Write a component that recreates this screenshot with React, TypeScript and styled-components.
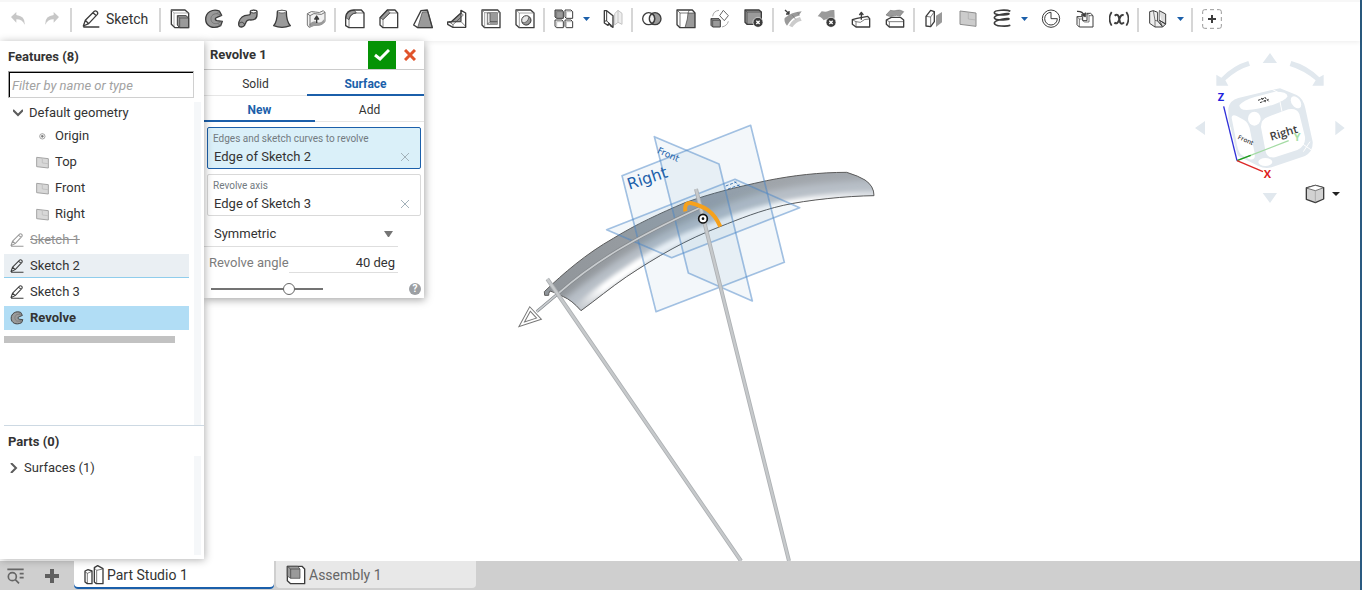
import React from 'react';
import styled, { createGlobalStyle } from 'styled-components';

const ink = '#333';
const line = '#3c3c3c';
const fill = '#9a9a9a';
const blue = '#1b5faa';

const GlobalStyle = createGlobalStyle`
  * { box-sizing: border-box; }
  body { margin: 0; background: #fff; color: ${ink}; font-family: Roboto, "Liberation Sans", sans-serif; font-size: 13px; line-height: 20px; }
  button, input, select { font: inherit; color: inherit; }
  button { border: 0; padding: 0; background: none; cursor: pointer; }
  svg { display: block; flex: none; }
  ul { list-style: none; margin: 0; padding: 0; }
`;

const Page = styled.div`
  display: flex;
  flex-direction: column;
  min-height: 100vh;
  border-right: 2px solid #2a5a80;
`;

/* Toolbar */

const ToolbarBar = styled.header`
  display: flex;
  height: 41px;
  padding: 0 1px 5px;
  border-top: 2px solid #f7f7f7;
  background: #fff;
  box-shadow: 0 1px 5px rgba(0, 0, 0, 0.08);
`;

const ToolGroup = styled.div`
  display: flex;
  align-items: center;

  & + & {
    padding-left: 5px;
    background: linear-gradient(#d6d6d6, #d6d6d6) 1px 6px / 2px 24px no-repeat;
  }
`;

const ToolButton = styled.button<{ $dim?: boolean }>`
  display: flex;
  align-items: center;
  justify-content: center;
  width: 34px;
  height: 34px;
  opacity: ${(p) => (p.$dim ? 0.65 : 1)};
`;

const SketchButton = styled.button`
  display: flex;
  align-items: center;
  gap: 6px;
  width: 84px;
  height: 34px;
  padding-left: 8px;
  font-size: 14px;
`;

const CaretButton = styled.button`
  display: flex;
  align-items: center;
  width: 15px;
  height: 34px;
  padding-left: 2px;
`;

const Glyph = ({ children, size = 20 }: { children: React.ReactNode; size?: number }) => (
  <svg width={size} height={size} viewBox="0 0 60 60" fill="none" stroke={line} strokeWidth="4" strokeLinejoin="round" aria-hidden="true">
    {children}
  </svg>
);

const Caret = ({ color = blue, w = 7 }: { color?: string; w?: number }) => (
  <svg width={w} height="4" viewBox="0 0 8 4" preserveAspectRatio="none" aria-hidden="true">
    <path d="M0 0H8L4 4Z" fill={color} />
  </svg>
);

const Pencil = ({ size = 18, color = line }: { size?: number; color?: string }) => (
  <svg width={size} height={size} viewBox="0 0 54 54" fill="none" stroke={color} strokeWidth="4" strokeLinejoin="round" aria-hidden="true">
    <path d="M4 48L10 31L37 4C41 0 50 7 46 13L20 41L4 48ZM10 31L20 41M33 8L43 17M4 51H52" />
  </svg>
);

const RevolveGlyph = ({ size = 20 }: { size?: number }) => (
  <Glyph size={size}>
    <path d="M46 6C26 -2 5 10 5 31C5 52 27 62 50 50L55 37L39 35C32 33 32 27 39 25L53 19Z" fill={fill} />
    <path d="M46 6L39 14C24 14 20 24 21 31C22 42 31 46 41 43L50 50M39 14L53 19M41 43L55 37" strokeWidth="2" stroke="#666" />
  </Glyph>
);

const DeleteBadge = () => (
  <>
    <circle cx="42" cy="40" r="15" fill={line} stroke="#fff" strokeWidth="2" />
    <path d="M37 35L47 45M47 35L37 45" stroke="#fff" />
  </>
);

type Tool = { label: string; icon: React.ReactNode; menu?: boolean };

const groups: Tool[][] = [
  [
    {
      label: 'Extrude',
      icon: (
        <Glyph>
          <path d="M4 3H45L56 13V56H15L4 46Z" />
          <path d="M12 12H56M12 12L4 3M12 12V52" strokeWidth="2" stroke="#888" />
          <path d="M22 20H48L56 27V56H29L22 48Z" fill={fill} strokeWidth="3" />
          <path d="M29 27V56M29 27H56M29 27L22 20" strokeWidth="2" />
        </Glyph>
      ),
    },
    { label: 'Revolve', icon: <RevolveGlyph /> },
    {
      label: 'Sweep',
      icon: (
        <Glyph>
          <path d="M37 8C37 2 57 2 57 8V17C57 30 47 33 38 33C27 32 25 36 22 44C18 57 2 57 2 46C2 36 8 24 20 20C31 17 37 20 37 14Z" fill={fill} />
          <ellipse cx="47" cy="8" rx="9" ry="4" fill="#fff" strokeWidth="3" />
          <path d="M5 43C12 35 20 43 20 50" strokeWidth="3" />
        </Glyph>
      ),
    },
    {
      label: 'Loft',
      icon: (
        <Glyph>
          <path d="M16 8C16 3 43 3 43 8C43 28 48 42 55 50Q30 60 5 50C12 42 16 28 16 8Z" fill={fill} />
          <ellipse cx="30" cy="8" rx="12" ry="4" fill="#fff" strokeWidth="2" />
        </Glyph>
      ),
    },
    {
      label: 'Thicken',
      icon: (
        <Glyph>
          <path d="M4 14Q16 4 28 9T52 5L57 10V38Q48 49 35 48T9 55L4 48Z" fill="#f2f2f2" stroke="#777" strokeWidth="3" />
          <path d="M10 46Q22 33 33 39T55 30V40Q48 51 35 50T11 56Z" fill={fill} stroke="none" />
          <path d="M4 14L12 20V50M12 20Q24 10 35 15T57 10" stroke="#777" strokeWidth="3" />
          <path d="M32 42V24M26 30L32 21L38 30Z" fill={line} />
        </Glyph>
      ),
    },
  ],
  [
    {
      label: 'Fillet',
      icon: (
        <Glyph>
          <path d="M2 26Q4 3 28 3L34 12Q16 14 12 32Z" fill={fill} strokeWidth="2" />
          <path d="M2 50V26Q4 3 28 3H49L57 12V56H12L2 50Z" />
          <path d="M12 56V32Q16 12 34 12H57" strokeWidth="2" />
        </Glyph>
      ),
    },
    {
      label: 'Chamfer',
      icon: (
        <Glyph>
          <path d="M3 26L25 3L33 11L12 32Z" fill={fill} strokeWidth="2" />
          <path d="M3 26L25 3H48L56 12V56H12L3 48Z" />
          <path d="M12 56V32L33 12H56" strokeWidth="2" />
        </Glyph>
      ),
    },
    {
      label: 'Draft',
      icon: (
        <Glyph>
          <path d="M14 56L28 9L45 8L58 56Z" fill={fill} strokeWidth="2" />
          <path d="M2 48L24 5L43 3L58 56H14Z" />
        </Glyph>
      ),
    },
    {
      label: 'Rib',
      icon: (
        <Glyph>
          <path d="M42 12V38L12 39Z" fill={fill} strokeWidth="2" />
          <path d="M42 4L56 12V55H18L2 46V39H12L42 12Z" />
          <path d="M42 4V38L56 52M42 38H6L18 47V55M42 12L49 18L18 47" strokeWidth="2" />
        </Glyph>
      ),
    },
    {
      label: 'Shell',
      icon: (
        <Glyph>
          <path d="M3 3H50L57 11V56H11L3 48Z" />
          <path d="M3 3L11 11V56M11 11H57M50 3L57 11" strokeWidth="2" stroke="#777" />
          <path d="M19 12H49V46H19Z" fill="#e6e6e6" strokeWidth="2" />
          <path d="M27 12H49V46H27Z" fill={fill} stroke="none" />
          <path d="M27 12V38L19 46M27 38H49" strokeWidth="2" />
        </Glyph>
      ),
    },
    {
      label: 'Hole',
      icon: (
        <Glyph>
          <path d="M3 3H47L57 12V56H13L3 47Z" />
          <path d="M3 3L13 12V56M13 12H57" strokeWidth="2" stroke="#777" />
          <circle cx="34" cy="34" r="14" fill="#e6e6e6" strokeWidth="3" />
          <path d="M42 23A14 14 0 1 1 21 41Q38 44 42 23Z" fill={fill} strokeWidth="2" />
        </Glyph>
      ),
    },
  ],
  [
    {
      label: 'Linear pattern',
      menu: true,
      icon: (
        <Glyph>
          <path d="M3 3H24L28 8V28H8L3 24Z" fill={fill} strokeWidth="3" />
          <path d="M33 3H51L56 8V28H37L33 24ZM3 33H24L28 38V56H8L3 52ZM33 33H51L56 38V56H37L33 52Z" strokeWidth="3" />
          <path d="M8 8H28M8 8V28M37 8H56M37 8V28M8 38H28M8 38V55M37 38H55M37 38V55" strokeWidth="1" />
        </Glyph>
      ),
    },
    {
      label: 'Mirror',
      icon: (
        <Glyph>
          <path d="M57 13L45 4L35 14V48L45 40L57 46ZM45 4V40" fill="#eee" stroke="#c4c4c4" strokeWidth="3" />
          <path d="M4 5H11L30 20V55L23 51L18 43L15 49L4 42Z" fill="#fff" />
          <path d="M11 6V36L30 53M4 36H11" strokeWidth="3" />
        </Glyph>
      ),
    },
  ],
  [
    {
      label: 'Boolean',
      icon: (
        <Glyph>
          <circle cx="39" cy="29" r="18" fill={fill} />
          <circle cx="20" cy="29" r="18" fill="#fff" />
          <path d="M30 14A18 18 0 0 1 30 44A18 18 0 0 1 30 14Z" fill="#eee" />
        </Glyph>
      ),
    },
    {
      label: 'Split',
      icon: (
        <Glyph>
          <path d="M36 12H57V56H27L34 30Z" fill={fill} stroke="none" />
          <path d="M3 3H49L57 12V56H12L3 47Z" />
          <path d="M3 3L12 12V56M12 12H57M40 3L36 12L34 30L27 56" strokeWidth="2" />
        </Glyph>
      ),
    },
    {
      label: 'Transform',
      icon: (
        <Glyph>
          <path d="M3 29H27L31 34V54H8L3 49Z" fill={fill} strokeWidth="3" />
          <path d="M3 29L8 34H31M8 34V54" strokeWidth="2" />
          <path d="M40 4L55 20L43 35L29 20Z" fill="#fff" stroke="#666" strokeWidth="3" />
          <path d="M8 22Q10 6 27 4M36 54Q52 50 55 37" stroke="#aaa" strokeWidth="3" />
        </Glyph>
      ),
    },
    {
      label: 'Delete part',
      icon: (
        <Glyph>
          <path d="M3 3H45L52 9V46H9L3 40Z" fill={fill} />
          <path d="M3 3L9 9H52M9 9V46" strokeWidth="2" />
          <DeleteBadge />
        </Glyph>
      ),
    },
  ],
  [
    {
      label: 'Modify fillet',
      icon: (
        <Glyph>
          <path d="M5 27Q26 9 56 7L47 20Q28 23 12 50Q2 38 5 27Z" fill={fill} stroke="none" />
          <path d="M18 50Q29 29 51 24L56 35Q38 38 28 55Z" fill="#ccc" stroke="none" />
          <path d="M27 17L38 31M44 10L49 20" stroke="#777" strokeWidth="2" />
          <path d="M6 3L18 14M18 6V15H9" />
        </Glyph>
      ),
    },
    {
      label: 'Delete face',
      icon: (
        <Glyph>
          <path d="M2 22L14 7Q28 10 34 6T52 3L53 26L40 31Q25 30 20 34Q11 22 2 22Z" fill={fill} stroke="none" />
          <DeleteBadge />
        </Glyph>
      ),
    },
    {
      label: 'Move face',
      icon: (
        <Glyph>
          <path d="M4 32L18 28L50 22L56 29V54H15L4 46Z" />
          <path d="M4 32L15 38L28 40Q40 28 56 30M15 38V54" strokeWidth="2" />
          <path d="M31 32V14M25 18L31 10L37 18" />
        </Glyph>
      ),
    },
    {
      label: 'Replace face',
      icon: (
        <Glyph>
          <path d="M3 18L16 4Q28 7 36 4T56 8L45 21Q34 17 24 21T3 18Z" fill={fill} stroke="#777" strokeWidth="2" />
          <path d="M4 33L19 25H46L56 33V54H13L4 46Z" />
          <path d="M4 33L13 38H56M13 38V54" strokeWidth="2" />
        </Glyph>
      ),
    },
  ],
  [
    {
      label: 'Offset surface',
      icon: (
        <Glyph>
          <path d="M6 51V22L20 4L31 8V38L20 53Z" />
          <path d="M20 53V24L31 8M6 22L20 24" strokeWidth="2" />
          <path d="M36 20L54 9V40L36 54Z" fill={fill} stroke="none" />
        </Glyph>
      ),
    },
    {
      label: 'Plane',
      icon: (
        <Glyph>
          <path d="M6 6L54 12V52L6 46Z" fill="#ccc" stroke="#8c8c8c" strokeWidth="3" />
          <path d="M31 9V30L54 33" stroke="#aaa" strokeWidth="2" />
        </Glyph>
      ),
    },
    {
      label: 'Helix',
      menu: true,
      icon: (
        <Glyph>
          <path d="M55 7C45 1 7 3 7 11S49 19 51 15S7 17 7 26S49 34 51 30S7 32 7 42C7 53 45 53 55 49" strokeWidth="5" />
        </Glyph>
      ),
    },
    {
      label: 'Sketch circle',
      icon: (
        <Glyph>
          <circle cx="30" cy="29" r="26" strokeWidth="3" />
          <path d="M30 10A19 19 0 1 0 49 29H30Z" strokeWidth="3" />
        </Glyph>
      ),
    },
    {
      label: 'Derived',
      icon: (
        <Glyph>
          <path d="M6 23H23V35H36V13H47L54 20V54H13L6 47Z" strokeWidth="3" />
          <path d="M6 23L13 30H23M13 30V54M36 13L42 20H54M42 20V39H29L23 35" strokeWidth="2" />
          <path d="M6 7Q23 6 27 19" strokeWidth="4" />
          <path d="M18 18L31 24L33 11Z" fill={line} strokeWidth="2" />
        </Glyph>
      ),
    },
    {
      label: 'Variable',
      icon: (
        <Glyph>
          <path d="M8 9Q-5 29 8 50M52 9Q65 29 52 50" strokeWidth="5" />
          <path d="M17 20Q28 11 31 31T45 40M44 19Q36 14 31 31T16 41" strokeWidth="6" />
        </Glyph>
      ),
    },
  ],
  [
    {
      label: 'Sheet metal',
      menu: true,
      icon: (
        <Glyph>
          <path d="M29 36L51 48L44 54H21V34Z" fill="#aaa" stroke="none" />
          <path d="M5 8L16 5L29 10V36L44 54H21L5 43Z" fill="#eee" strokeWidth="3" />
          <path d="M16 5L21 34V54M29 36L21 34" strokeWidth="2" />
          <path d="M34 5L53 15V45L44 54M53 45L34 34Z" fill="#ddd" strokeWidth="3" />
          <path d="M34 5V34L44 54" strokeWidth="2" />
        </Glyph>
      ),
    },
  ],
  [
    {
      label: 'Add custom feature',
      icon: (
        <Glyph>
          <path d="M2 15V8Q2 2 8 2H15M45 2H52Q58 2 58 8V15M58 45V52Q58 58 52 58H45M15 58H8Q2 58 2 52V45M24 2H36M24 58H36M2 24V36M58 24V36" stroke="#999" strokeWidth="3" />
          <path d="M30 18V42M18 30H42" strokeWidth="6" />
        </Glyph>
      ),
    },
  ],
];

const UndoGlyph = ({ flip }: { flip?: boolean }) => (
  <Glyph>
    <path
      d={flip ? 'M51 24L35 9V18Q8 21 10 47Q17 31 35 31V41Z' : 'M9 24L25 9V18Q52 21 50 47Q43 31 25 31V41Z'}
      fill="#aaa"
      stroke="none"
    />
  </Glyph>
);

const Toolbar = () => (
  <ToolbarBar>
    <ToolGroup>
      <ToolButton $dim aria-label="Undo"><UndoGlyph /></ToolButton>
      <ToolButton $dim aria-label="Redo"><UndoGlyph flip /></ToolButton>
    </ToolGroup>
    <ToolGroup>
      <SketchButton><Pencil />Sketch</SketchButton>
    </ToolGroup>
    {groups.map((tools) => (
      <ToolGroup key={tools[0].label}>
        {tools.map((tool) => (
          <React.Fragment key={tool.label}>
            <ToolButton aria-label={tool.label}>{tool.icon}</ToolButton>
            {tool.menu && <CaretButton aria-label={`${tool.label} menu`}><Caret /></CaretButton>}
          </React.Fragment>
        ))}
      </ToolGroup>
    ))}
  </ToolbarBar>
);

/* Feature list */

const Workspace = styled.main`
  display: flex;
  flex: 1;
`;

const Sidebar = styled.aside`
  position: relative;
  z-index: 1;
  display: flex;
  flex-direction: column;
  width: 204px;
  margin-bottom: 2px;
  padding-left: 4px;
  background: #fff;
  box-shadow: 1px 1px 8px rgba(0, 0, 0, 0.3);
`;

const PanelTitle = styled.h2`
  margin: 0;
  padding: 6px 4px 4px;
  font-size: 13px;
  line-height: 20px;
  font-weight: 700;
`;

const FilterInput = styled.input`
  width: 186px;
  height: 27px;
  margin: 0 4px 4px;
  padding: 2px 3px 0;
  border: 1px solid;
  border-color: #a0a0a0 #d0d0d0 #d0d0d0 #a0a0a0;
  box-shadow: inset 1px 1px 0 #000;
  outline: 0;

  &::placeholder { color: #a2a2a2; font-style: italic; }
`;

const ScrollArea = styled.div<{ $grow?: boolean }>`
  flex: ${(p) => (p.$grow ? '1' : 'none')};
  min-height: ${(p) => (p.$grow ? 'auto' : '99px')};
  margin-right: 3px;
  padding-right: 12px;
  background: linear-gradient(#f5f7f9, #f5f7f9) right / 7px 100% no-repeat;
`;

const FeatureRow = styled.button<{ $depth?: number; $state?: 'hover' | 'selected' | 'suppressed'; $head?: boolean }>`
  display: flex;
  align-items: center;
  gap: 6px;
  width: 100%;
  height: ${(p) => (p.$head ? 22 : 24)}px;
  margin-bottom: ${(p) => (p.$head ? 0 : 2)}px;
  padding-top: 1px;
  padding-left: ${(p) => (p.$depth ? 32 : p.$head ? 9 : 6)}px;
  text-align: left;
  border-bottom: 1px solid ${(p) => (p.$state === 'hover' ? '#8fcdec' : 'transparent')};
  background-color: ${(p) => (p.$state === 'selected' ? '#b1ddf5' : p.$state === 'hover' ? '#eaeff3' : 'transparent')};
  font-weight: ${(p) => (p.$state === 'selected' ? 700 : 400)};
  color: ${(p) => (p.$state === 'suppressed' ? '#919191' : ink)};
  text-decoration: ${(p) => (p.$state === 'suppressed' ? 'line-through' : 'none')};
`;

const RollbackBar = styled.div`
  width: 171px;
  height: 7px;
  margin-top: 6px;
  background: #c2c2c2;
`;

const PartsPanel = styled.section`
  height: 134px;
  border-top: 1px solid #cdd9e3;
`;

const PlaneGlyph = () => (
  <svg width="13" height="13" viewBox="0 0 39 39" fill="#d8d8d8" stroke="#a4a4a4" strokeWidth="3" aria-hidden="true">
    <path d="M2 4L37 8V36L2 32Z" />
    <path d="M19 6V21L37 23" strokeWidth="2" stroke="#b8b8b8" />
  </svg>
);

const OriginGlyph = () => (
  <svg width="13" height="13" viewBox="0 0 39 39" fill="none" stroke="#777" strokeWidth="2" aria-hidden="true">
    <circle cx="19" cy="19" r="8" />
    <circle cx="19" cy="19" r="3" fill="#777" />
  </svg>
);

const Chevron = ({ open }: { open?: boolean }) => (
  <svg width={open ? 10 : 8} height="10" viewBox={open ? '0 0 10 10' : '0 0 8 10'} fill="none" stroke="#5c5c5c" strokeWidth="2" aria-hidden="true">
    <path d={open ? 'M0 2L5 7L10 2' : 'M1 0L6 5L1 10'} />
  </svg>
);

const FeaturePanel = () => (
  <Sidebar>
    <PanelTitle>Features (8)</PanelTitle>
    <FilterInput aria-label="Filter features" placeholder="Filter by name or type" />
    <ScrollArea $grow>
      <ul>
        <li><FeatureRow $head><Chevron open />Default geometry</FeatureRow></li>
        <li><FeatureRow $depth={1}><OriginGlyph />Origin</FeatureRow></li>
        {['Top', 'Front', 'Right'].map((name) => (
          <li key={name}><FeatureRow $depth={1}><PlaneGlyph />{name}</FeatureRow></li>
        ))}
        <li><FeatureRow $state="suppressed"><Pencil size={14} color="#999" />Sketch 1</FeatureRow></li>
        <li><FeatureRow $state="hover"><Pencil size={14} />Sketch 2</FeatureRow></li>
        <li><FeatureRow><Pencil size={14} />Sketch 3</FeatureRow></li>
        <li><FeatureRow $state="selected"><RevolveGlyph size={14} />Revolve</FeatureRow></li>
      </ul>
      <RollbackBar />
    </ScrollArea>
    <PartsPanel>
      <PanelTitle>Parts (0)</PanelTitle>
      <ScrollArea>
        <FeatureRow><Chevron />Surfaces (1)</FeatureRow>
      </ScrollArea>
    </PartsPanel>
  </Sidebar>
);

/* Revolve dialog */

const Dialog = styled.form`
  position: relative;
  align-self: flex-start;
  width: 220px;
  height: 257px;
  background: #fff;
  box-shadow: 1px 2px 8px rgba(0, 0, 0, 0.35);
`;

const DialogHeader = styled.div`
  display: flex;
  align-items: center;
  height: 29px;
  padding-left: 6px;
  border-bottom: 1px solid #ccc;
  font-weight: 700;
`;

const HeaderButton = styled.button<{ $accept?: boolean }>`
  display: flex;
  align-items: center;
  justify-content: center;
  width: 28px;
  height: 28px;
  margin-left: ${(p) => (p.$accept ? 'auto' : '0')};
  background: ${(p) => (p.$accept ? '#059305' : 'transparent')};
`;

const TabRow = styled.div<{ $cols: string }>`
  display: grid;
  grid-template-columns: ${(p) => p.$cols};
  height: 26px;
`;

const ModeTab = styled.button<{ $active?: boolean }>`
  padding-top: 2px;
  font-size: 12px;
  font-weight: ${(p) => (p.$active ? 700 : 400)};
  color: ${(p) => (p.$active ? blue : ink)};
  box-shadow: inset 0 ${(p) => (p.$active ? `-2px 0 ${blue}` : '-1px 0 #e6e6e6')};
`;

const QueryBox = styled.div<{ $active?: boolean }>`
  height: 42px;
  margin: 5px 3px 0;
  padding: 3px 5px 0;
  border: 1px solid ${(p) => (p.$active ? blue : '#d9d9d9')};
  border-radius: 2px;
  background: ${(p) => (p.$active ? '#daf0f9' : '#fff')};
`;

const QueryLabel = styled.div`
  font-size: 10px;
  line-height: 16px;
  color: #727a80;
`;

const QueryValue = styled.div`
  display: flex;
  justify-content: space-between;
  align-items: center;
  padding-left: 1px;
  line-height: 20px;
`;

const ClearButton = styled.button`
  display: flex;
  align-items: center;
  justify-content: center;
  width: 20px;
  height: 20px;
`;

const EndType = styled.div`
  display: grid;
  align-items: center;
  width: 194px;
  height: 26px;
  margin-top: 5px;
  border-bottom: 1px solid #dedede;

  & > * { grid-area: 1 / 1; }
  & > svg { justify-self: end; margin-right: 5px; pointer-events: none; }
`;

const EndSelect = styled.select`
  width: 100%;
  height: 24px;
  padding: 0 0 0 10px;
  border: 0;
  appearance: none;
  background: none;
  outline: 0;
`;

const AngleRow = styled.div`
  display: flex;
  align-items: center;
  width: 194px;
  height: 26px;
  padding-left: 5px;
`;

const AngleLabel = styled.label`
  flex: none;
  width: 80px;
  padding-top: 6px;
  color: #7c7c7c;
`;

const AngleInput = styled.input`
  flex: 1;
  min-width: 0;
  height: 26px;
  padding: 6px 3px 0 0;
  border: 0;
  border-bottom: 1px solid #dedede;
  text-align: right;
  outline: 0;
  background: none;
`;

const SliderRow = styled.div`
  display: flex;
  align-items: center;
  justify-content: space-between;
  height: 22px;
  margin-top: 5px;
  padding: 0 3px 0 7px;
`;

const Slider = styled.input`
  width: 112px;
  height: 16px;
  margin: 0;
  appearance: none;
  background: linear-gradient(#737373, #737373) center / 100% 2px no-repeat;

  &::-webkit-slider-thumb {
    appearance: none;
    width: 12px;
    height: 12px;
    border: 1px solid #666;
    border-radius: 50%;
    background: #fff;
  }
`;

const HelpCircle = styled.button`
  width: 12px;
  height: 12px;
  border-radius: 50%;
  background: #9c9fa3;
  color: #fff;
  font-size: 10px;
  line-height: 12px;
  font-weight: 700;
`;

const Query = ({ label, value, active }: { label: string; value: string; active?: boolean }) => (
  <QueryBox $active={active}>
    <QueryLabel>{label}</QueryLabel>
    <QueryValue>
      {value}
      <ClearButton type="button" aria-label={`Clear ${label}`}>
        <svg width="8" height="8" viewBox="0 0 8 8" stroke="#a3b2ba" aria-hidden="true"><path d="M0 0L8 8M8 0L0 8" /></svg>
      </ClearButton>
    </QueryValue>
  </QueryBox>
);

const RevolveDialog = () => (
  <Dialog>
    <DialogHeader>
      Revolve 1
      <HeaderButton type="button" $accept aria-label="Accept">
        <svg width="16" height="12" viewBox="0 0 16 12" fill="none" stroke="#fff" strokeWidth="3" aria-hidden="true"><path d="M1 6L6 10L15 1" /></svg>
      </HeaderButton>
      <HeaderButton type="button" aria-label="Cancel">
        <svg width="12" height="12" viewBox="0 0 12 12" stroke="#e0532b" strokeWidth="3" aria-hidden="true"><path d="M1 1L11 11M11 1L1 11" /></svg>
      </HeaderButton>
    </DialogHeader>
    <TabRow $cols="103fr 117fr">
      <ModeTab type="button">Solid</ModeTab>
      <ModeTab type="button" $active>Surface</ModeTab>
    </TabRow>
    <TabRow $cols="111fr 109fr">
      <ModeTab type="button" $active>New</ModeTab>
      <ModeTab type="button">Add</ModeTab>
    </TabRow>
    <Query active label="Edges and sketch curves to revolve" value="Edge of Sketch 2" />
    <Query label="Revolve axis" value="Edge of Sketch 3" />
    <EndType>
      <EndSelect aria-label="Revolve type" defaultValue="Symmetric">
        <option>Symmetric</option>
      </EndSelect>
      <svg width="9" height="6" viewBox="0 0 9 6" aria-hidden="true"><path d="M0 0H9L5 6H4Z" fill="#757575" /></svg>
    </EndType>
    <AngleRow>
      <AngleLabel htmlFor="angle">Revolve angle</AngleLabel>
      <AngleInput id="angle" defaultValue="40 deg" />
    </AngleRow>
    <SliderRow>
      <Slider type="range" aria-label="Opacity" min={0} max={100} defaultValue={72} />
      <HelpCircle type="button" aria-label="Help">?</HelpCircle>
    </SliderRow>
  </Dialog>
);

/* Model view */

const Viewport = styled.section`
  position: relative;
  display: flex;
  justify-content: space-between;
  flex: 1;
  min-width: 0;
`;

const SceneSvg = styled.svg`
  position: absolute;
  inset: 0;
  width: 100%;
  height: 100%;
  font-family: "DejaVu Sans", sans-serif;
`;

const ribbon =
  'M133 545C190 490 260 430 340 385C410 342 480 310 555 278C640 248 700 234 800 212C880 196 960 187 1040 187Q1076 198 1095 210Q1122 228 1122 257C1040 258 920 270 850 286C780 302 720 326 660 350C560 388 470 440 380 500C330 534 290 568 243 602Q215 570 190 560Q165 547 150 543Q145 550 146 556L134 556Z';

const Scene = () => (
  <SceneSvg viewBox="-888 -207 3468 1560" aria-label="Model view">
    <defs>
      <clipPath id="ribbonClip"><path d={ribbon} /></clipPath>
      <filter id="soft" x="-20%" y="-20%" width="140%" height="140%"><feGaussianBlur stdDeviation="10" /></filter>
      <filter id="glow" x="-20%" y="-20%" width="140%" height="140%"><feGaussianBlur stdDeviation="6" /></filter>
      <linearGradient id="metal" x1="130" y1="600" x2="1120" y2="200" gradientUnits="userSpaceOnUse">
        <stop offset="0" stopColor="#8f9499" />
        <stop offset="0.5" stopColor="#9ca1a6" />
        <stop offset="1" stopColor="#a4a9af" />
      </linearGradient>
      <linearGradient id="shine" x1="210" y1="600" x2="1120" y2="240" gradientUnits="userSpaceOnUse">
        <stop offset="0" stopColor="#b4bac1" />
        <stop offset="0.12" stopColor="#fff" />
        <stop offset="0.75" stopColor="#fff" />
        <stop offset="1" stopColor="#d9dde2" />
      </linearGradient>
    </defs>
    <path d={ribbon} fill="url(#metal)" />
    <g clipPath="url(#ribbonClip)" fill="none">
      <path d="M200 600C360 470 500 390 660 325C800 262 960 245 1150 240" stroke="#b8bfc7" strokeWidth="62" filter="url(#soft)" />
      <path d="M225 602C360 490 460 428 560 382C600 364 630 354 660 343C800 286 960 260 1150 256" stroke="url(#shine)" strokeWidth="28" filter="url(#glow)" />
    </g>
    <path d={ribbon} fill="none" stroke="#5c5c5c" strokeWidth="3" strokeLinejoin="round" />
    <g fill="rgba(90,140,190,0.07)" stroke="#4a86c8" strokeOpacity="0.5" strokeWidth="5" strokeLinejoin="round">
      <path d="M366 197L752 46L853 457L468 605Z" />
      <path d="M463 80L657 162L757 573L565 489Z" />
      <path d="M320 359L705 208L899 293L515 443Z" />
    </g>
    <g fill={blue}>
      <text x="388" y="239" fontSize="47" transform="rotate(-18 388 239)">Right</text>
      <text x="470" y="128" fontSize="27" transform="rotate(24 470 128)">Front</text>
    </g>
    <g stroke={blue} strokeWidth="3" strokeDasharray="9 5" strokeOpacity="0.8">
      <path d="M677 228L709 216M684 237L723 223M704 214L721 232" />
    </g>
    <g fill="none">
      <path d="M110 605L175 550C280 458 400 384 600 293" stroke="#85898d" strokeWidth="9" />
      <path d="M110 605L175 550C280 458 400 384 600 293" stroke="#c9cdd0" strokeWidth="5" />
      <path d="M142 507L723 1353M588 237L867 1353" stroke="#adb0b3" strokeWidth="12" />
      <path d="M142 507L723 1353M588 237L867 1353" stroke="#c6c9cb" strokeWidth="7" />
      <path d="M65 643L90 597L117 626Z" fill="#fff" stroke="#777" strokeWidth="11" />
      <path d="M65 643L90 597L117 626Z" stroke="#fff" strokeWidth="5" />
      <path d="M556 304Q552 278 572 279C610 288 640 302 661 350" stroke="#f6a11c" strokeWidth="12" />
      <circle cx="609" cy="326" r="13" fill="#fff" stroke="#111" strokeWidth="5" />
    </g>
    <circle cx="609" cy="326" r="4" fill="#111" />
  </SceneSvg>
);

const Navigation = styled.div`
  position: relative;
  display: grid;
  align-self: flex-start;
  margin-left: auto;

  & > * { grid-area: 1 / 1; }
`;

const ViewMenuButton = styled.button`
  display: flex;
  align-items: center;
  gap: 7px;
  place-self: end;
  width: 55px;
  height: 34px;
`;

const ViewCube = () => (
  <svg width="180" height="170" viewBox="0 3 540 510" fontFamily='"Open Sans", sans-serif' aria-label="View orientation">
    <g fill="#e1e8ee">
      <path d="M248 69L270 39L291 69ZM248 459H291L270 489ZM45 264L75 243V285ZM494 264L466 242V286Z" />
      <path d="M205 63L210 77Q170 88 136 121L145 137H109V104L124 113Q160 76 205 63ZM334 63L329 78Q370 90 407 121L397 137H431V104L418 112Q382 76 334 63Z" />
      <path d="M145 205Q150 180 175 174L275 150L300 145L350 165Q370 175 376 205L398 305Q400 335 375 348L275 382Q255 388 235 378L180 350Q168 345 163 320L145 235Z" />
    </g>
    <g fill="#fff">
      <path d="M178 196Q190 181 224 171L285 155Q325 155 322 170Q316 180 280 194Q235 209 200 210Q178 210 178 196Z" />
      <path d="M155 234Q155 222 170 228L192 240Q207 248 211 275L224 340Q228 364 207 357L186 346Q176 340 171 315Z" />
      <path d="M243 262Q242 238 265 230L325 208Q350 203 358 222L375 290Q378 318 352 330L285 352Q262 355 257 335Z" />
      <ellipse cx="223" cy="236" rx="19" ry="21" />
      <ellipse cx="348" cy="187" rx="13" ry="20" transform="rotate(-35 348 187)" />
      <ellipse cx="256" cy="366" rx="21" ry="12" />
    </g>
    <g stroke="#fff" strokeWidth="3" fill="none">
      <path d="M300 185L306 215M368 312L394 330M390 305L370 335M276 148L300 160M150 260L172 350" />
    </g>
    <g fill={line}>
      <text x="274" y="302" fontSize="34" fontWeight="600" transform="rotate(-17 274 302)">Right</text>
      <text x="172" y="296" fontSize="19" fontWeight="600" transform="rotate(24 172 296)">Front</text>
    </g>
    <path d="M234 181L257 173M240 188L266 178M243 174L260 188M254 172L266 184" stroke={line} strokeWidth="3" strokeDasharray="8 3" />
    <g strokeWidth="4" fill="none">
      <path d="M171 362L326 302" stroke="#a3dba3" />
      <path d="M171 362L212 346" stroke="#1f9a1f" />
      <path d="M171 362L131 199" stroke="#3030d8" />
      <path d="M171 362L249 395" stroke="#dc2626" />
    </g>
    <g fontSize="33" fontWeight="700">
      <text x="113" y="184" fill="#2222dd">Z</text>
      <text x="251" y="413" fill="#dc1c1c">X</text>
      <text x="341" y="302" fill="#a9dfa9">Y</text>
    </g>
  </svg>
);

const ModelView = () => (
  <Viewport>
    <Scene />
    <RevolveDialog />
    <Navigation>
      <ViewCube />
      <ViewMenuButton aria-label="View tools">
        <svg width="20" height="20" viewBox="0 0 60 60" stroke={line} strokeWidth="4" strokeLinejoin="round" aria-hidden="true">
          <path d="M4 12L31 4L56 11V45L31 56L4 46Z" fill="#d2d2d2" />
          <path d="M4 12L31 4L56 11L31 20Z" fill="#fff" strokeWidth="2" />
          <path d="M31 20V55" stroke="#999" strokeWidth="2" />
        </svg>
        <Caret color="#222" w={8} />
      </ViewMenuButton>
    </Navigation>
  </Viewport>
);

/* Document tabs */

const TabBar = styled.footer`
  display: flex;
  align-items: flex-start;
  height: 29px;
  background: #cfcfcf;
`;

const BarButton = styled.button`
  display: flex;
  align-items: center;
  justify-content: center;
  width: 30px;
  height: 29px;
  margin-right: 7px;
`;

const DocumentTab = styled.button<{ $active?: boolean }>`
  display: flex;
  align-items: center;
  gap: 3px;
  width: 200px;
  height: ${(p) => (p.$active ? 28 : 27)}px;
  margin-right: 2px;
  padding-left: 10px;
  border-radius: 0 0 4px 4px;
  box-shadow: ${(p) => (p.$active ? `inset 0 -2px 0 ${blue}` : 'none')};
  background: ${(p) => (p.$active ? '#fff' : '#e8e8e8')};
  color: ${(p) => (p.$active ? ink : '#666')};
  font-size: 14px;
`;

const DocumentTabs = () => (
  <TabBar>
    <BarButton aria-label="Search tabs">
      <svg width="17" height="16" viewBox="0 0 51 48" fill="none" stroke="#666" strokeWidth="5" aria-hidden="true">
        <path d="M1 4H50M38 17H50M38 29H50M25 35L36 46" />
        <circle cx="16" cy="26" r="12" />
      </svg>
    </BarButton>
    <BarButton aria-label="Add tab">
      <svg width="14" height="14" viewBox="0 0 14 14" stroke="#5f5f5f" strokeWidth="4" aria-hidden="true"><path d="M7 0V14M0 7H14" /></svg>
    </BarButton>
    <DocumentTab $active>
      <Glyph>
        <path d="M3 18L12 14L24 18V56H10L3 51ZM31 8L41 2L57 11V56H37L31 51Z" />
        <path d="M3 20L10 25V56M10 25L24 19M31 9L38 16V56M38 16L56 12" strokeWidth="2" />
      </Glyph>
      Part Studio 1
    </DocumentTab>
    <DocumentTab>
      <Glyph>
        <path d="M4 4H48L56 12V56H14L4 47Z" fill="#fff" />
        <path d="M4 4H35L42 12V40H14L4 33Z" fill={fill} strokeWidth="2" />
        <path d="M14 12H42M14 12V40M14 12L4 4" strokeWidth="2" />
      </Glyph>
      Assembly 1
    </DocumentTab>
  </TabBar>
);

const App = () => (
  <>
    <GlobalStyle />
    <Page>
      <Toolbar />
      <Workspace>
        <FeaturePanel />
        <ModelView />
      </Workspace>
      <DocumentTabs />
    </Page>
  </>
);

export default App;
